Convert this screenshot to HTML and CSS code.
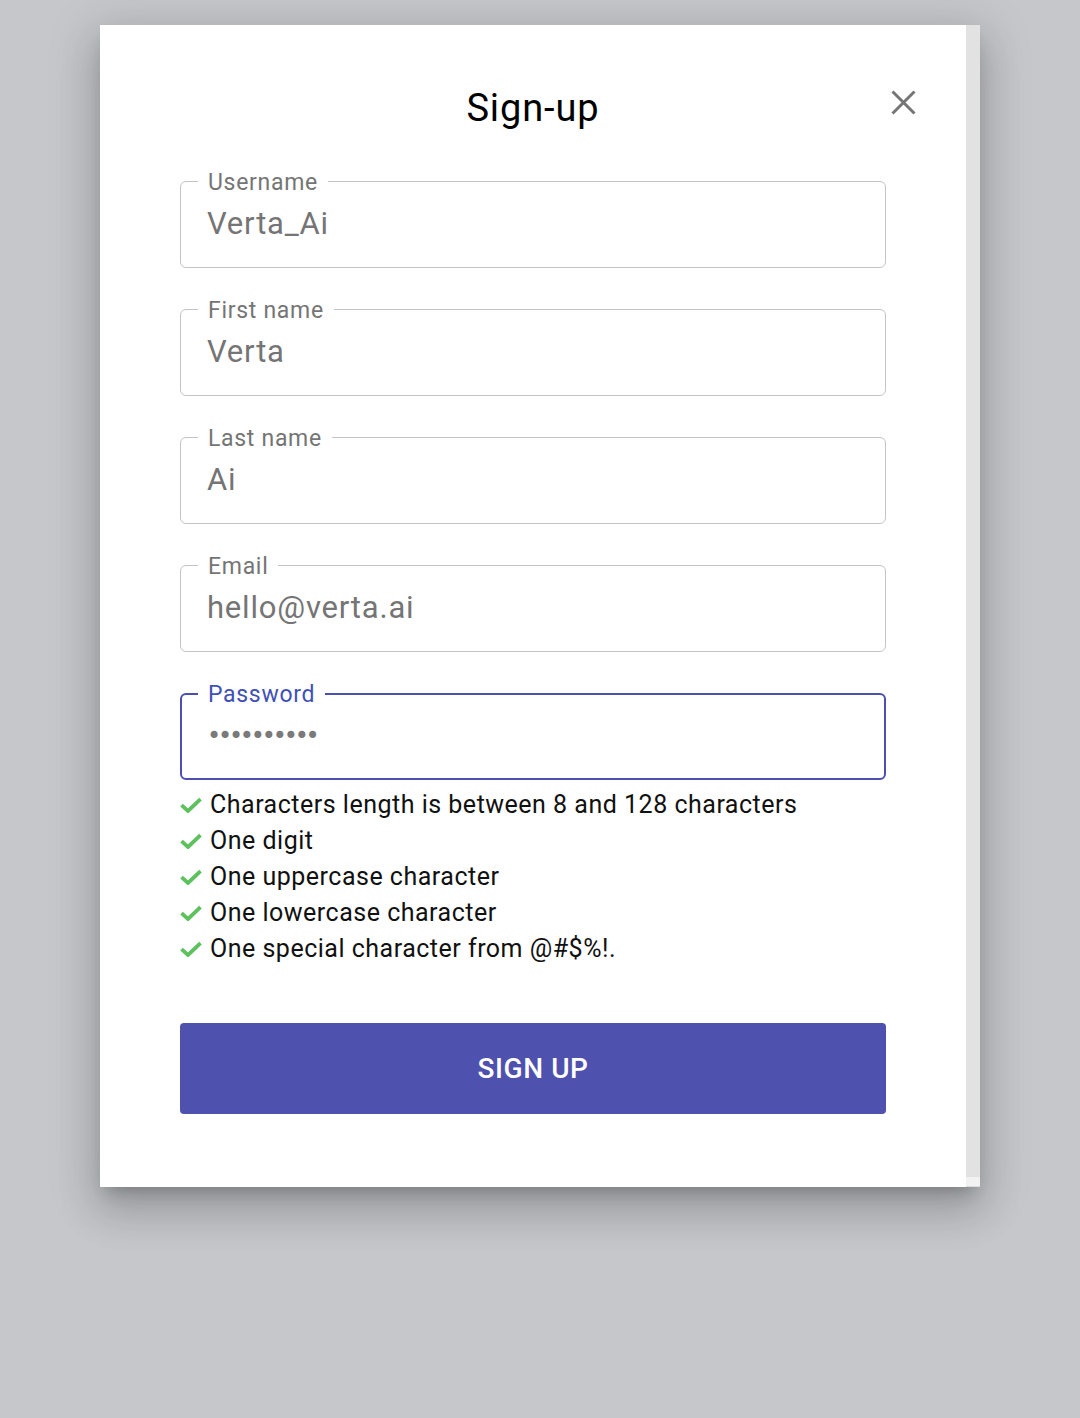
FILE: index.html
```html
<!DOCTYPE html>
<html lang="en">
<head>
<meta charset="utf-8">
<title>Sign-up</title>
<link rel="stylesheet" href="styles.css">
</head>
<body>
<div class="dialog">
  <div class="dialog-main">
    <div class="header">
      <span></span>
      <h1 class="title">Sign-up</h1>
      <button class="close" aria-label="Close">
        <svg width="25" height="25" viewBox="0 0 25 25"><path d="M1.5 1.5 L23.5 23.5 M23.5 1.5 L1.5 23.5" stroke="#757575" stroke-width="3" fill="none"/></svg>
      </button>
    </div>
    <div class="form">
      <div class="field"><span class="label">Username</span><div class="value">Verta_Ai</div></div>
      <div class="field"><span class="label">First name</span><div class="value">Verta</div></div>
      <div class="field"><span class="label">Last name</span><div class="value">Ai</div></div>
      <div class="field"><span class="label">Email</span><div class="value">hello@verta.ai</div></div>
      <div class="field focused"><span class="label">Password</span><div class="value dots">••••••••••</div></div>
      <ul class="rules">
        <li><svg class="check" width="22" height="16" viewBox="0 0 22 16"><path d="M1.5 8.2 L8 14 L20.5 2.2" stroke="#5dc15d" stroke-width="3.8" fill="none"/></svg>Characters length is between 8 and 128 characters</li>
        <li><svg class="check" width="22" height="16" viewBox="0 0 22 16"><path d="M1.5 8.2 L8 14 L20.5 2.2" stroke="#5dc15d" stroke-width="3.8" fill="none"/></svg>One digit</li>
        <li><svg class="check" width="22" height="16" viewBox="0 0 22 16"><path d="M1.5 8.2 L8 14 L20.5 2.2" stroke="#5dc15d" stroke-width="3.8" fill="none"/></svg>One uppercase character</li>
        <li><svg class="check" width="22" height="16" viewBox="0 0 22 16"><path d="M1.5 8.2 L8 14 L20.5 2.2" stroke="#5dc15d" stroke-width="3.8" fill="none"/></svg>One lowercase character</li>
        <li><svg class="check" width="22" height="16" viewBox="0 0 22 16"><path d="M1.5 8.2 L8 14 L20.5 2.2" stroke="#5dc15d" stroke-width="3.8" fill="none"/></svg>One special character from @#$%!.</li>
      </ul>
      <button class="submit">SIGN UP</button>
    </div>
  </div>
  <div class="scrolltrack"><div class="track"></div><div class="corner"></div></div>
</div>
</body>
</html>
```
FILE: styles.css
```css
html, body {
  margin: 0;
  padding: 0;
}
body {
  background: #c6c7cb;
  font-family: Roboto, "Liberation Sans", sans-serif;
  padding: 24px 0 0 100px;
  height: 1418px;
  box-sizing: border-box;
}
.dialog {
  width: 880px;
  height: 1163px;
  background: #fff;
  display: flex;
  box-shadow: 0 11px 15px -7px rgba(0,0,0,.2), 0 24px 38px 3px rgba(0,0,0,.14), 0 9px 46px 8px rgba(0,0,0,.12);
  border-top: 1px solid #b9babd;
  box-sizing: border-box;
}
.dialog-main {
  flex: 1;
  padding-top: 62px;
}
.scrolltrack {
  width: 14px;
  display: flex;
  flex-direction: column;
}
.track {
  flex: 1;
  background: #e2e2e2;
}
.corner {
  height: 9px;
  background: #f2f2f2;
  border-bottom: 1px solid #dcdcdc;
}
.header {
  display: grid;
  grid-template-columns: 1fr auto 1fr;
  padding: 0 50px;
}
.title {
  margin: 0;
  font-size: 38px;
  line-height: 42px;
  font-weight: 400;
  letter-spacing: 0.9px;
  color: #000;
}
.close {
  justify-self: end;
  align-self: start;
  margin-top: 3px;
  padding: 0;
  border: 0;
  background: none;
  width: 25px;
  height: 25px;
  display: block;
}
.close svg { display: block; }
.form {
  padding: 52px 80px 0;
  display: flex;
  flex-direction: column;
}
.field {
  position: relative;
  height: 87px;
  box-sizing: border-box;
  border: 1px solid #c4c4c4;
  border-radius: 6px;
  padding: 24px 26px 0;
  margin-bottom: 41px;
}
.label {
  position: absolute;
  top: -12px;
  left: 17px;
  padding: 0 10px;
  background: #fff;
  font-size: 23px;
  line-height: 26px;
  letter-spacing: 0.7px;
  color: #757575;
}
.value {
  font-size: 31px;
  line-height: 36px;
  letter-spacing: 0.8px;
  color: #757575;
}
.field.focused {
  border: 2px solid #4b50b0;
  padding: 23px 25px 0;
  margin-bottom: 7px;
}
.field.focused .label {
  color: #3f51b5;
  top: -13px;
  left: 16px;
}
.value.dots {
  font-family: "DejaVu Sans", sans-serif;
  font-size: 24px;
  letter-spacing: -3.2px;
  color: #7a7a7a;
  padding-left: 0;
}
.rules {
  list-style: none;
  margin: 0;
  padding: 0;
}
.rules li {
  display: flex;
  align-items: center;
  font-size: 25px;
  line-height: 36px;
  letter-spacing: 0.5px;
  color: #111;
}
.check {
  display: block;
  margin-right: 8px;
  flex: none;
}
.submit {
  margin-top: 56px;
  height: 91px;
  border: 0;
  border-radius: 4px;
  background: #4e51ad;
  color: #fff;
  font-family: Roboto, "Liberation Sans", sans-serif;
  font-size: 28px;
  font-weight: 500;
  letter-spacing: 0.6px;
}
```
